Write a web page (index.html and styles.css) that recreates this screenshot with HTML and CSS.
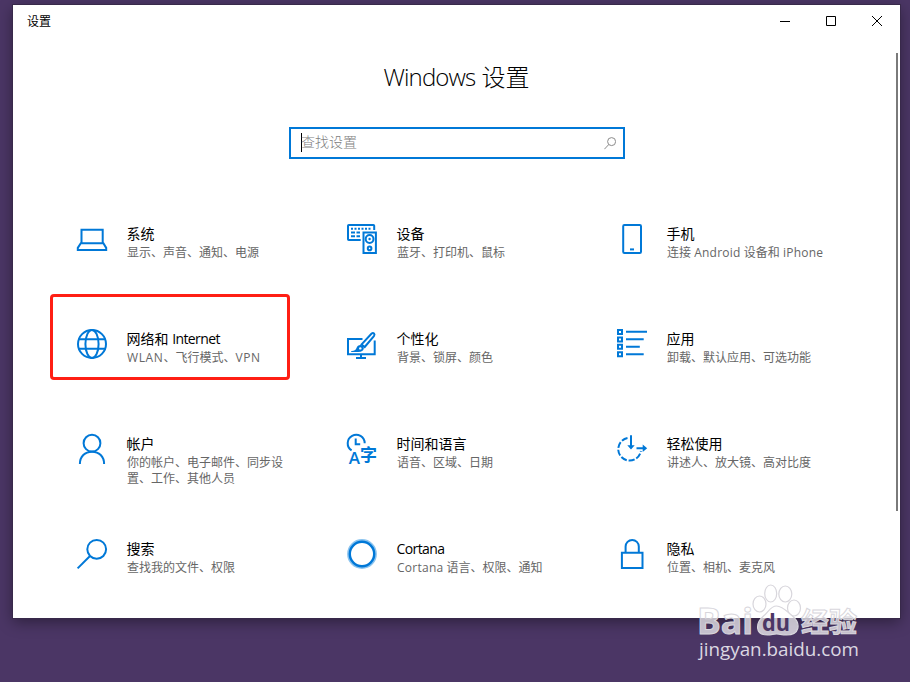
FILE: index.html
```html
<!DOCTYPE html>
<html lang="zh-CN">

<head>
  <meta charset="UTF-8">
  <title>设置</title>
  <meta name="viewport" content="width=device-width, initial-scale=1.0">
  <link rel="stylesheet" href="styles.css">
</head>

<body>
  <div class="window">
    <header class="titlebar">
      <span class="titlebar-text">设置</span>
      <div class="window-buttons">
        <svg viewBox="0 0 46 32"><path d="M18 16.5h10" /></svg>
        <svg viewBox="0 0 46 32"><path d="M18.5 11.5h9v9h-9z" /></svg>
        <svg viewBox="0 0 46 32"><path d="M18 11l10 10M28 11l-10 10" /></svg>
      </div>
    </header>

    <h1><span class="latin">Windows</span> 设置</h1>

    <div class="search-box">
      <span class="caret"></span>
      <span class="placeholder">查找设置</span>
      <svg class="search-icon" viewBox="0 0 12 13"><circle cx="7.6" cy="4.6" r="4" /><path d="M4.7 7.6L.4 12.2" /></svg>
    </div>

    <main class="grid">
      <a class="item">
        <svg class="icon" viewBox="0 0 30 30">
          <path d="M4.5 19.3V5.8h21.2v13.5M3.8 19.3h22.6l2.8 4.6v2H.8v-2z" />
        </svg>
        <div class="text">
          <h2>系统</h2>
          <p>显示、声音、通知、电源</p>
        </div>
      </a>

      <a class="item">
        <svg class="icon" viewBox="0 0 30 30">
          <path d="M13.7 16H1.8Q1 16 1 15.2V1.8Q1 1 1.8 1h24.6q.8 0 .8.8V6" />
          <path d="M4 4.7h21" stroke-dasharray="2 1.5" />
          <path d="M4 8.5h4M9.5 8.5h3.5M4 12.3h4M9.5 12.3h3.5" />
          <path d="M16.5 8.6h12.4v20.4H16.5z" />
          <circle cx="22.6" cy="15" r="3.9" />
          <circle cx="22.6" cy="15" r="1.2" class="solid" />
          <circle cx="22.6" cy="24.4" r="1.8" />
        </svg>
        <div class="text">
          <h2>设备</h2>
          <p>蓝牙、打印机、鼠标</p>
        </div>
      </a>

      <a class="item">
        <svg class="icon" viewBox="0 0 30 30">
          <rect x="6.2" y="1" width="17.8" height="28" rx="1.2" />
          <path d="M13 25.4h4" />
        </svg>
        <div class="text">
          <h2>手机</h2>
          <p>连接 <span class="latin">Android</span> 设备和 <span class="latin">iPhone</span></p>
        </div>
      </a>

      <a class="item marked">
        <svg class="icon" viewBox="0 0 30 30">
          <circle cx="15" cy="15" r="14" />
          <ellipse cx="15" cy="15" rx="6.6" ry="14" />
          <path d="M1.8 10.3h26.4M1.8 19.7h26.4" />
        </svg>
        <div class="text">
          <h2>网络和 <span class="latin">Internet</span></h2>
          <p><span class="latin caps">WLAN</span>、飞行模式、<span class="latin caps">VPN</span></p>
        </div>
      </a>

      <a class="item">
        <svg class="icon" viewBox="0 0 30 30">
          <path d="M15.5 9.9H1v15.3h26.7V11.5M14 25.2v4M9 29.1h10" />
          <path d="M14.6 15.4L24.4 4.8q1.5-1.3 2.6-.3 1 1.1-.1 2.6L17.7 18z" />
          <path d="M4.2 21.9q4 .3 5.2-2.6 1.2-3.5 4.4-3.3 3 .9 3 3.6-.5 3.4-5.5 3.4H4.2z" class="solid" />
          <circle cx="13.3" cy="19.4" r="1.2" class="hole" />
        </svg>
        <div class="text">
          <h2>个性化</h2>
          <p>背景、锁屏、颜色</p>
        </div>
      </a>

      <a class="item">
        <svg class="icon" viewBox="0 0 30 30">
          <path d="M1 1h4v4H1zM1 8.4h4v4H1zM1 15.8h4v4H1zM1 23.3h4v4H1z" />
          <path d="M9 2.8h21M9 10.3h17.7M9 17.7h13.8M9 25.3h17.7" />
        </svg>
        <div class="text">
          <h2>应用</h2>
          <p>卸载、默认应用、可选功能</p>
        </div>
      </a>

      <a class="item">
        <svg class="icon" viewBox="0 0 30 30">
          <circle cx="15" cy="9.2" r="8.4" />
          <path d="M2.9 30c0-7.4 5-12.3 12.1-12.3S27.1 22.6 27.1 30" />
        </svg>
        <div class="text">
          <h2>帐户</h2>
          <p>你的帐户、电子邮件、同步设置、工作、其他人员</p>
        </div>
      </a>

      <a class="item">
        <svg class="icon" viewBox="0 0 30 30">
          <path d="M4.6 16.4A8.5 8.5 0 1 1 17.7 9.2" />
          <path d="M8.7 4.5v5.7h4.5" />
          <text x="1.8" y="29.7" class="glyph-latin">A</text>
          <text x="13" y="26.5" class="glyph-cjk">字</text>
        </svg>
        <div class="text">
          <h2>时间和语言</h2>
          <p>语音、区域、日期</p>
        </div>
      </a>

      <a class="item">
        <svg class="icon" viewBox="0 0 30 30">
          <path d="M10.5 4A11.4 11.4 0 1 0 23.9 17" stroke-dasharray="6.2 1.9" />
          <path d="M14 1.3v13M19.5 14.2H28" />
          <path d="M10.3 11.2h7.4L14 15.6zM25.7 10.5v7.4l4.5-3.7z" class="solid" />
        </svg>
        <div class="text">
          <h2>轻松使用</h2>
          <p>讲述人、放大镜、高对比度</p>
        </div>
      </a>

      <a class="item">
        <svg class="icon" viewBox="0 0 30 30">
          <circle cx="19.7" cy="10.3" r="9.4" />
          <path d="M13 17L.6 29.4" />
        </svg>
        <div class="text">
          <h2>搜索</h2>
          <p>查找我的文件、权限</p>
        </div>
      </a>

      <a class="item">
        <svg class="icon" viewBox="0 0 30 30">
          <circle cx="15" cy="15" r="13.8" class="halo" />
          <circle cx="15" cy="15" r="12.2" class="ring" />
        </svg>
        <div class="text">
          <h2><span class="latin">Cortana</span></h2>
          <p><span class="latin">Cortana</span> 语言、权限、通知</p>
        </div>
      </a>

      <a class="item">
        <svg class="icon" viewBox="0 0 30 30">
          <path d="M4.9 13.8h20.6v15.3H4.9zM8.6 13.8V7.5a6.6 6.6 0 0 1 13.2 0v6.3" />
        </svg>
        <div class="text">
          <h2>隐私</h2>
          <p>位置、相机、麦克风</p>
        </div>
      </a>
    </main>

    <div class="scrollbar"></div>
  </div>

  <svg class="watermark" viewBox="0 0 180 90">
    <g class="wm-shape">
      <ellipse cx="59.5" cy="22" rx="6.5" ry="8" />
      <ellipse cx="70.7" cy="11.5" rx="6" ry="8.5" />
      <ellipse cx="85.3" cy="12" rx="6.5" ry="8" />
      <ellipse cx="94" cy="26" rx="6.5" ry="8" />
      <path d="M76.5 24c-6 0-8 6-13 10-8 7-9 19 4 19 4 0 6-1 9-1s5 1 10 1c13 0 15-11 6-19-5-4-10-10-16-10z" />
    </g>
    <text x="-3" y="52" class="wm-bai" textLength="56" lengthAdjust="spacingAndGlyphs">Bai</text>
    <text x="62" y="48.5" class="wm-du" textLength="28" lengthAdjust="spacingAndGlyphs">du</text>
    <text x="101" y="50" class="wm-jy" textLength="56" lengthAdjust="spacingAndGlyphs">经验</text>
    <text x="-1" y="74" class="wm-url" textLength="160" lengthAdjust="spacingAndGlyphs">jingyan.baidu.com</text>
  </svg>
</body>

</html>
```

FILE: styles.css
```css
* {
  box-sizing: border-box;
}

body {
  font-family: 'Open Sans', 'Noto Sans CJK SC', sans-serif;
  background: #4b3665;
  margin: 0;
  padding: 5px 10px 0 13px;
  height: 682px;
  overflow: hidden;
  position: relative;
}

.window {
  position: relative;
  height: 613px;
  background: white;
  box-shadow: 0 0 0 1px #38294a, 0 4px 14px rgba(0, 0, 0, 0.4);
}

.titlebar {
  display: flex;
  justify-content: space-between;
  height: 32px;
  padding-left: 14px;
}

.titlebar-text {
  font-size: 12px;
  line-height: 34px;
  color: #000;
}

.window-buttons {
  display: flex;
}

.window-buttons svg {
  width: 46px;
  height: 32px;
  fill: none;
  stroke: #000;
  stroke-width: 1;
}

h1 {
  margin: 24px 0 0;
  height: 32px;
  line-height: 32px;
  font-size: 24px;
  font-weight: 300;
  text-align: center;
  color: #000;
}

h1 .latin {
  letter-spacing: -0.9px;
}

.search-box {
  display: flex;
  align-items: center;
  width: 336px;
  height: 32px;
  margin: 34px 0 0 276px;
  padding: 0 7px 0 10px;
  border: 2px solid #0078d7;
}

.caret {
  width: 1px;
  height: 19px;
  margin: 0 -1px 2px 0;
  background: #000;
}

.placeholder {
  flex: 1;
  padding-bottom: 2px;
  font-size: 14px;
  line-height: 20px;
  font-weight: 300;
  color: #808080;
}

.search-icon {
  width: 12px;
  height: 13px;
  fill: none;
  stroke: #8a8a8a;
  stroke-width: 1;
}

.grid {
  display: grid;
  grid-template-columns: repeat(3, 270px);
  grid-auto-rows: 105px;
  margin: 65px 0 0 64px;
}

.item {
  position: relative;
  display: flex;
  gap: 20px;
}

.icon {
  flex: none;
  width: 30px;
  height: 30px;
  overflow: visible;
  fill: none;
  stroke: #0078d7;
  stroke-width: 2;
}

.icon .solid {
  fill: #0078d7;
  stroke: none;
}

.icon .hole {
  fill: white;
  stroke: none;
}

.icon .halo {
  stroke: #8cc4ef;
  stroke-width: 2.2;
}

.icon .ring {
  stroke-width: 2.4;
}

.icon text {
  fill: #0078d7;
  stroke: none;
}

.glyph-latin {
  font-size: 17px;
  font-weight: 600;
}

.glyph-cjk {
  font-size: 17px;
  font-weight: 700;
}

.text {
  width: 160px;
}

h2 {
  margin: 0 0 0 -0.5px;
  font-size: 14px;
  font-weight: 400;
  line-height: 20px;
  color: #000;
}

h2 .latin {
  letter-spacing: -0.6px;
}

p {
  margin: 1px 0 0;
  font-size: 12px;
  line-height: 16px;
  color: #666;
}

p .latin {
  letter-spacing: 0.25px;
}

p .caps {
  letter-spacing: 0.6px;
}

/* red frame around the network entry */
.marked::before {
  content: "";
  position: absolute;
  box-sizing: border-box;
  left: -27px;
  top: -35px;
  width: 240px;
  height: 86px;
  border: 3px solid #ff1f14;
  border-radius: 4px;
}

.scrollbar {
  position: absolute;
  right: 2px;
  top: 48px;
  width: 2px;
  height: 458px;
  background: #7a7a7a;
}

.watermark {
  position: absolute;
  left: 700px;
  top: 582px;
  width: 180px;
  height: 90px;
  overflow: visible;
}

.wm-shape {
  fill: rgba(255, 255, 255, 0.7);
  stroke: #d8d6dc;
  stroke-width: 1.2;
}

.wm-bai,
.wm-jy {
  fill: rgba(255, 255, 255, 0.7);
  stroke: #d8d6dc;
  stroke-width: 1;
  font-weight: 700;
}

.wm-bai {
  font-size: 35px;
}

.wm-jy {
  font-size: 27px;
}

.wm-du {
  font-size: 23px;
  font-weight: 700;
  fill: #4b3665;
}

.wm-url {
  font-size: 18px;
  font-weight: 500;
  fill: #dcd8e2;
}
```
